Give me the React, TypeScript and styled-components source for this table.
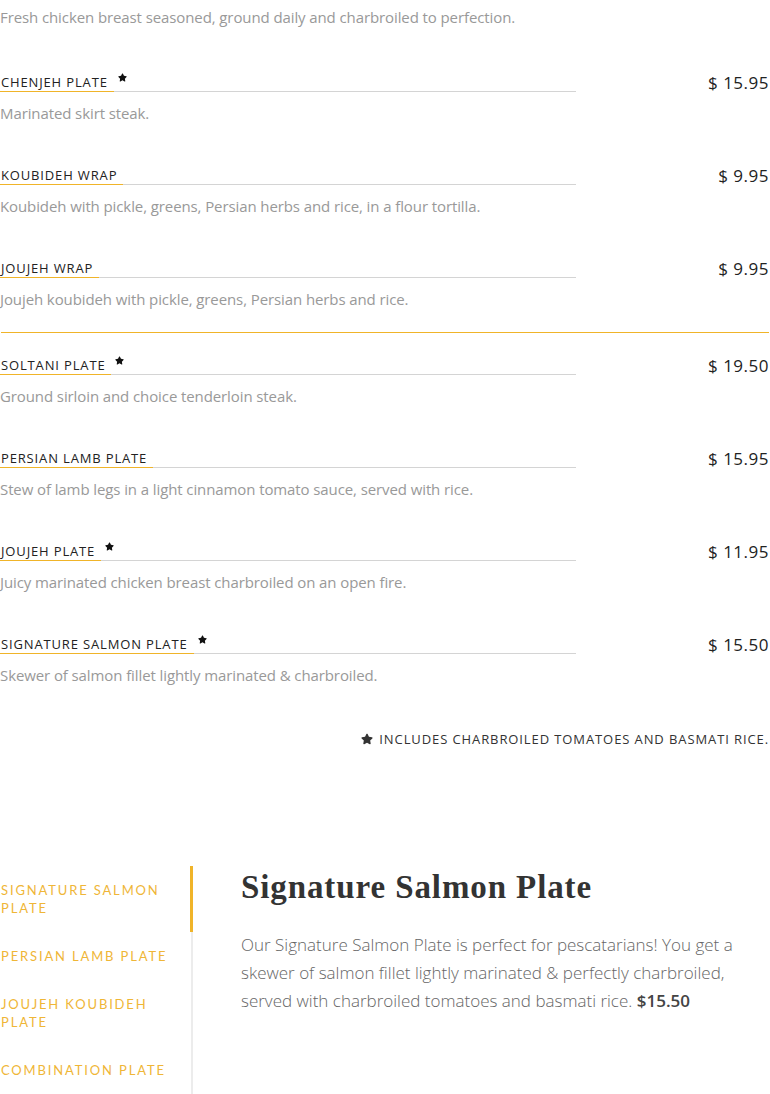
import { FC, Fragment } from 'react';
import styled, { createGlobalStyle } from 'styled-components';
import { FaStar } from 'react-icons/fa';

type MenuItem = {
  name: string;
  price: string;
  text: string;
  star?: boolean;
  afterRule?: boolean;
};

const GlobalStyle = createGlobalStyle`
  body {
    margin: 0;
    background: #fff;
    font-family: 'Open Sans', 'Liberation Sans', sans-serif;
  }
`;

const Page = styled.div`
  width: 768px;
  padding: 0 1px 0 1px;
`;

const List = styled.div`
  display: flex;
  flex-direction: column;
`;

const LeadText = styled.p`
  margin: 5px 0 0 -1px;
  font-size: 15px;
  line-height: 24px;
  letter-spacing: -0.1px;
  color: #999;
`;

const Item = styled.div<{ $afterRule?: boolean }>`
  margin-top: ${(p) => (p.$afterRule ? '23px' : '41px')};
  &:first-of-type {
    margin-top: 44px;
  }
`;

const Head = styled.div`
  display: flex;
  align-items: flex-start;
  height: 19px;
`;

const NameLine = styled.div`
  flex: 0 0 576px;
  display: flex;
  align-items: flex-start;
  border-bottom: 1px solid #d4d4d4;
  height: 18px;
  margin-left: -1px;
`;

const Name = styled.span`
  display: inline-block;
  padding: 0 6px 0 1px;
  height: 18px;
  border-bottom: 1px solid #f0b429;
  font-size: 13px;
  line-height: 18px;
  letter-spacing: 0.85px;
  text-transform: uppercase;
  color: #222;
`;

const Star = styled(FaStar)`
  margin: 0 0 0 4px;
  font-size: 9px;
  color: #111;
`;

const Price = styled.span`
  margin-left: auto;
  font-size: 17px;
  line-height: 20px;
  letter-spacing: 0.5px;
  color: #222;
`;

const Desc = styled.p`
  margin: 9px 0 0 -1px;
  font-size: 15px;
  line-height: 24px;
  letter-spacing: -0.1px;
  color: #999;
`;

const Rule = styled.div`
  margin-top: 21px;
  height: 1px;
  background: #f0b429;
`;

const Note = styled.div`
  margin-top: 43px;
  display: flex;
  justify-content: flex-end;
  align-items: center;
  gap: 6px;
  font-size: 13px;
  line-height: 18px;
  letter-spacing: 0.9px;
  text-transform: uppercase;
  color: #333;
`;

const NoteStar = styled(FaStar)`
  font-size: 12px;
  color: #333;
`;

const Tabs = styled.section`
  margin-top: 118px;
  display: grid;
  grid-template-columns: 192px 1fr;
  column-gap: 48px;
`;

const TabList = styled.div`
  border-right: 2px solid #ececec;
  margin-left: -1px;
  min-height: 232px;
`;

const Tab = styled.div<{ $active?: boolean }>`
  padding: 15px 14px 15px 1px;
  margin-right: -2px;
  border-right: 3px solid ${(p) => (p.$active ? '#f0b429' : 'transparent')};
  font-family: Lato, 'Open Sans', sans-serif;
  font-size: 13px;
  line-height: 18px;
  letter-spacing: 1.85px;
  text-transform: uppercase;
  color: #efb637;
`;

const Panel = styled.div`
  padding-top: 1px;
`;

const Title = styled.h2`
  margin: 0;
  font-family: 'Liberation Serif', 'DejaVu Serif', serif;
  font-weight: 700;
  font-size: 33px;
  line-height: 40px;
  letter-spacing: 0.9px;
  color: #333;
`;

const Body = styled.p`
  margin: 24px 0 0;
  font-size: 17px;
  line-height: 28px;
  font-weight: 300;
  color: #666;
  b {
    font-weight: 600;
    color: #444;
  }
`;

const items: MenuItem[] = [
  { name: 'Chenjeh Plate', price: '$ 15.95', text: 'Marinated skirt steak.', star: true },
  {
    name: 'Koubideh Wrap',
    price: '$ 9.95',
    text: 'Koubideh with pickle, greens, Persian herbs and rice, in a flour tortilla.',
  },
  { name: 'Joujeh Wrap', price: '$ 9.95', text: 'Joujeh koubideh with pickle, greens, Persian herbs and rice.' },
  { name: 'Soltani Plate', price: '$ 19.50', text: 'Ground sirloin and choice tenderloin steak.', star: true, afterRule: true },
  {
    name: 'Persian Lamb Plate',
    price: '$ 15.95',
    text: 'Stew of lamb legs in a light cinnamon tomato sauce, served with rice.',
  },
  { name: 'Joujeh Plate', price: '$ 11.95', text: 'Juicy marinated chicken breast charbroiled on an open fire.', star: true },
  {
    name: 'Signature Salmon Plate',
    price: '$ 15.50',
    text: 'Skewer of salmon fillet lightly marinated & charbroiled.',
    star: true,
  },
];

const tabs = ['Signature Salmon Plate', 'Persian Lamb Plate', 'Joujeh Koubideh Plate', 'Combination Plate'];

const MenuRow: FC<{ item: MenuItem }> = ({ item }) => (
  <Item $afterRule={item.afterRule}>
    <Head>
      <NameLine>
        <Name>{item.name}</Name>
        {item.star && <Star />}
      </NameLine>
      <Price>{item.price}</Price>
    </Head>
    <Desc>{item.text}</Desc>
  </Item>
);

const App: FC = () => {
  return (
    <Page>
      <GlobalStyle />
      <LeadText>Fresh chicken breast seasoned, ground daily and charbroiled to perfection.</LeadText>
      <List>
        {items.map((item) => (
          <Fragment key={item.name}>
            {item.afterRule && <Rule />}
            <MenuRow item={item} />
          </Fragment>
        ))}
      </List>
      <Note>
        <NoteStar />
        Includes charbroiled tomatoes and basmati rice.
      </Note>
      <Tabs>
        <TabList>
          {tabs.map((t, i) => (
            <Tab key={t} $active={i === 0}>
              {t}
            </Tab>
          ))}
        </TabList>
        <Panel>
          <Title>Signature Salmon Plate</Title>
          <Body>
            Our Signature Salmon Plate is perfect for pescatarians! You get a skewer of salmon fillet lightly
            marinated &amp; perfectly charbroiled, served with charbroiled tomatoes and basmati rice. <b>$15.50</b>
          </Body>
        </Panel>
      </Tabs>
    </Page>
  );
};

export default App;
